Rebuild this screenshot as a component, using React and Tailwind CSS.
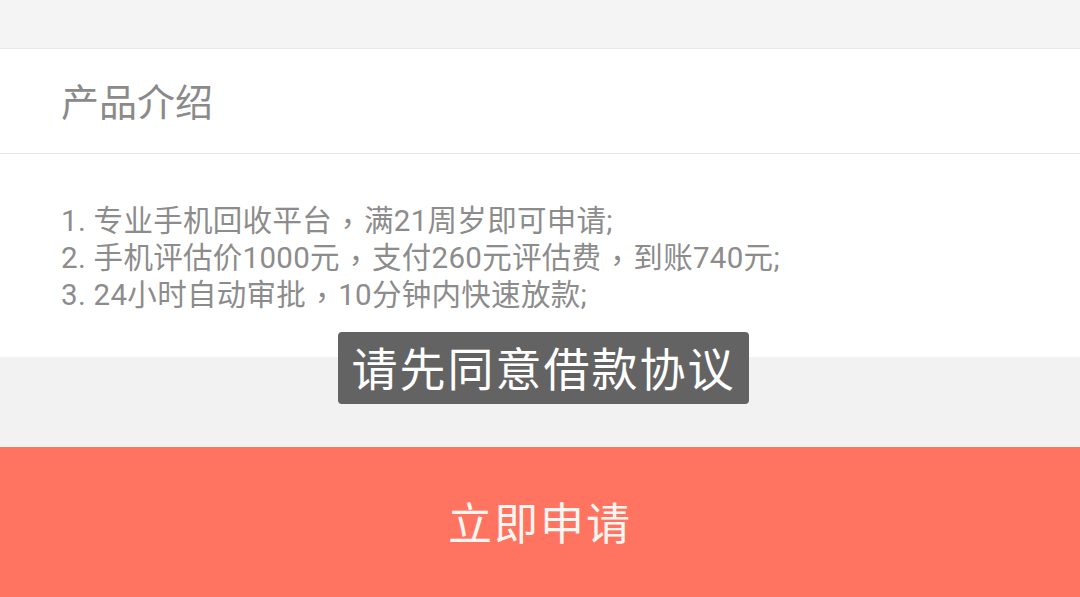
function C() {
  return <span className="inline-block w-[32px] text-center font-['Noto_Sans_CJK_TC',sans-serif]">，</span>;
}

function Line({ children }) {
  return <div className="h-[37px] flex items-center">{children}</div>;
}

export default function App() {
  return (
    <div className="relative w-[1080px] h-[597px] overflow-hidden bg-[#f4f4f4] flex flex-col font-['Noto_Sans_CJK_SC',sans-serif]">
      <div className="h-[49px] bg-[#f4f4f4] border-b border-[#e8e8e8] shrink-0" />
      <div className="bg-white shrink-0">
        <div className="h-[105px] flex items-center pl-[61px] pb-[3px] border-b border-[#e6e6e6] text-[38px] text-[#8a8a8a]">
          产品介绍
        </div>
        <div className="pt-[49px] pb-[43px] pl-[61px] text-[29.5px] leading-[37px] tracking-[0.3px] text-[#8c8c8c] whitespace-nowrap font-['Roboto','Noto_Sans_CJK_SC',sans-serif]">
          <Line>1. 专业手机回收平台<C />满21周岁即可申请;</Line>
          <Line>2. 手机评估价1000元<C />支付260元评估费<C />到账740元;</Line>
          <Line>3. 24小时自动审批<C />10分钟内快速放款;</Line>
        </div>
      </div>
      <div className="h-[90px] bg-[#f2f2f2] shrink-0" />
      <div className="flex-1 bg-[#ff7461] flex items-center justify-center pb-[3px] text-[44px] text-[#fff6f2] tracking-[2px]">
        立即申请
      </div>
      <div className="absolute left-[338px] top-[332px] w-[411px] h-[72px] rounded-[4px] bg-[#636363] flex items-center justify-center pb-[4px] text-[46px] text-white tracking-[2px]">
        请先同意借款协议
      </div>
    </div>
  );
}
